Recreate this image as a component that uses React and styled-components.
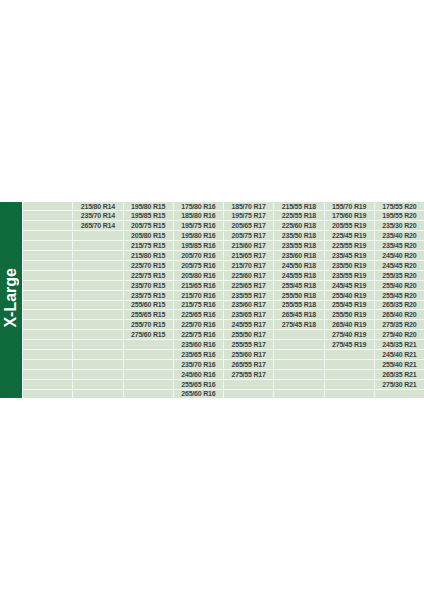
import React from 'react';
import styled, { createGlobalStyle } from 'styled-components';

const GlobalStyle = createGlobalStyle`
  html, body { margin: 0; padding: 0; background: #ffffff; }
  body { font-family: "Liberation Sans", Arial, sans-serif; }
`;

const Page = styled.div` display: flex; align-items: center; min-height: 100vh; width: 424px; `;
const Chart = styled.div` display: flex; width: 100%; `;
const SideBar = styled.div` width: 22px; background: #0f6a3c; display: flex; align-items: center; justify-content: center; `;
const SideLabel = styled.span` writing-mode: vertical-rl; transform: rotate(180deg); color: #ffffff; font-weight: 700; font-size: 16px; line-height: 1; margin-top: -5px; `;
const Grid = styled.div` flex: 1; margin-left: 1px; display: grid; grid-template-columns: repeat(8, 1fr); grid-auto-rows: 8.9px; gap: 1px; background: #f4f8f2; `;
const Cell = styled.div` background: #d5e3d0; color: #3f3f3f; font-size: 7px; letter-spacing: -0.2px; font-weight: 700; display: flex; align-items: center; justify-content: center; white-space: nowrap; line-height: 1; `;

const columns = [
  [],
  ['215/80 R14', '235/70 R14', '265/70 R14'],
  ['195/80 R15', '195/85 R15', '205/75 R15', '205/80 R15', '215/75 R15', '215/80 R15', '225/70 R15', '225/75 R15', '235/70 R15', '235/75 R15', '255/60 R15', '255/65 R15', '255/70 R15', '275/60 R15'],
  ['175/80 R16', '185/80 R16', '195/75 R16', '195/80 R16', '195/85 R16', '205/70 R16', '205/75 R16', '205/80 R16', '215/65 R16', '215/70 R16', '215/75 R16', '225/65 R16', '225/70 R16', '225/75 R16', '235/60 R16', '235/65 R16', '235/70 R16', '245/60 R16', '255/65 R16', '265/60 R16'],
  ['185/70 R17', '195/75 R17', '205/65 R17', '205/75 R17', '215/60 R17', '215/65 R17', '215/70 R17', '225/60 R17', '225/65 R17', '235/55 R17', '235/60 R17', '235/65 R17', '245/55 R17', '255/50 R17', '255/55 R17', '255/60 R17', '265/55 R17', '275/55 R17'],
  ['215/55 R18', '225/55 R18', '225/60 R18', '235/50 R18', '235/55 R18', '235/60 R18', '245/50 R18', '245/55 R18', '255/45 R18', '255/50 R18', '255/55 R18', '265/45 R18', '275/45 R18'],
  ['155/70 R19', '175/60 R19', '205/55 R19', '225/45 R19', '225/55 R19', '235/45 R19', '235/50 R19', '235/55 R19', '245/45 R19', '255/40 R19', '255/45 R19', '255/50 R19', '265/40 R19', '275/40 R19', '275/45 R19'],
  ['175/55 R20', '195/55 R20', '235/30 R20', '235/40 R20', '235/45 R20', '245/40 R20', '245/45 R20', '255/35 R20', '255/40 R20', '255/45 R20', '265/35 R20', '265/40 R20', '275/35 R20', '275/40 R20', '245/35 R21', '245/40 R21', '255/40 R21', '265/35 R21', '275/30 R21'],
];

const ROWS = 20;

export default function App() {
  const cells = [];
  for (let r = 0; r < ROWS; r++) {
    columns.forEach((col, c) => {
      cells.push(<Cell key={`${r}-${c}`}>{col[r] || ''}</Cell>);
    });
  }

  return (
    <Page>
      <GlobalStyle />
      <Chart>
        <SideBar>
          <SideLabel>X-Large</SideLabel>
        </SideBar>
        <Grid>{cells}</Grid>
      </Chart>
    </Page>
  );
}
